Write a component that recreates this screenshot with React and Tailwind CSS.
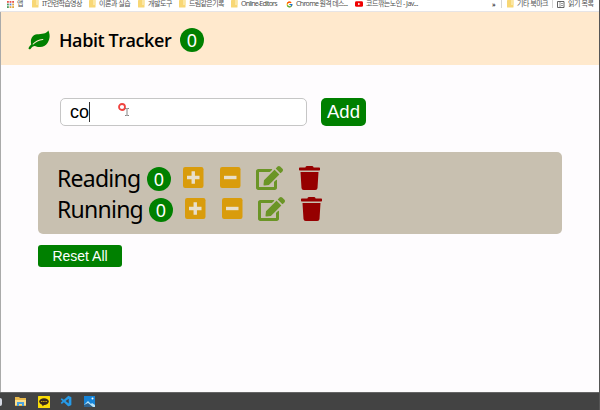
import React from "react";
import { FaEdit, FaTrash } from "react-icons/fa";
import { FcGoogle } from "react-icons/fc";
import { VscVscode } from "react-icons/vsc";

function Folder() {
  return (
    <svg className="h-2 w-[7px] shrink-0" viewBox="0 0 7 8">
      <rect width="6.5" height="7.5" rx="0.6" fill="#f8d775" />
      <path d="M4 0h2.5v5H4z" fill="#fbe6a2" />
    </svg>
  );
}

function AppsGrid() {
  const colors = ["#e5544a", "#e5544a", "#e5544a", "#4a9b5c", "#5a83d8", "#e0a63c", "#4a9b5c", "#e0a63c", "#e0a63c"];
  return (
    <svg className="h-[7px] w-[7px] shrink-0" viewBox="0 0 7 7">
      {colors.map((c, i) => (
        <rect key={i} x={(i % 3) * 2.6} y={Math.floor(i / 3) * 2.6} width="1.8" height="1.8" fill={c} />
      ))}
    </svg>
  );
}

function YouTube() {
  return (
    <svg className="h-[6px] w-2 shrink-0" viewBox="0 0 14 10">
      <rect width="14" height="10" rx="2.5" fill="#f00000" />
      <path d="M5.5 2.8v4.4L9.5 5z" fill="#fff" />
    </svg>
  );
}

function Leaf() {
  return (
    <svg className="h-5 w-[22px] shrink-0" viewBox="0 0 22 20">
      <path
        d="M20.3.4C22.2 4 22.2 9 19.5 13C17 17 12.5 18 7.5 16.2C5.5 15.800 4 17 2.500 19C1.700 19.800.2 19.100.6 18C1.200 16.600 2.200 15.300 3.200 14.500C2 9.200 4.200 5 9 4.300C14 3.700 18 4 20.300.4Z"
        fill="#008000"
      />
      <path d="M5.200 14C7.500 11.500 10.500 10 14.800 9.500" fill="none" stroke="#ffe9cd" strokeWidth="1.100" strokeLinecap="round" />
    </svg>
  );
}

function SquareIcon({ glyph }) {
  return (
    <svg className="size-[21px] shrink-0" viewBox="0 0 21 21">
      <rect width="20.5" height="21" rx="2.2" fill="#d99c0c" />
      <path d={glyph} stroke="#e8dfcb" strokeWidth="3.4" fill="none" />
    </svg>
  );
}

function Bookmark({ icon, label, width, tracking = "tracking-[-0.4px]" }) {
  return (
    <div className={`flex shrink-0 items-center gap-[3px] ${width}`}>
      {icon}
      <span className={tracking}>{label}</span>
    </div>
  );
}

function BookmarksBar() {
  return (
    <div className="flex h-3 items-start border-b border-[#e6e4e6] bg-white pl-[7px] text-[7px] leading-[8px] whitespace-nowrap text-[#505050]">
      <Bookmark icon={<AppsGrid />} label="앱" width="w-[25px]" />
      <Bookmark icon={<Folder />} label="IT관련학습영상" width="w-[57px]" tracking="tracking-[-0.65px]" />
      <Bookmark icon={<Folder />} label="이론과 실습" width="w-[49px]" tracking="tracking-[-0.45px]" />
      <Bookmark icon={<Folder />} label="개발도구" width="w-[41px]" />
      <Bookmark icon={<Folder />} label="드림같은기록" width="w-[52px]" tracking="tracking-[-0.65px]" />
      <Bookmark icon={<Folder />} label="Online-Editors" width="w-[55px]" tracking="tracking-[-0.8px]" />
      <Bookmark icon={<FcGoogle className="h-[7px] w-[7px]" />} label="Chrome 원격 데스..." width="w-[69px]" tracking="tracking-[-0.65px]" />
      <Bookmark icon={<YouTube />} label="코드깎는노인 - Jav..." width="w-[137px]" tracking="tracking-[-0.5px]" />
      <span className="w-[9px] shrink-0 text-[7px] leading-[10px] text-black">»</span>
      <div className="h-2 w-1.5 shrink-0 border-l border-[#d5d5d5]" />
      <Bookmark icon={<Folder />} label="기타 북마크" width="w-[45px]" tracking="tracking-[-0.5px]" />
      <div className="h-2 w-[5px] shrink-0 border-l border-[#d5d5d5]" />
      <Bookmark
        icon={
          <svg className="h-[7px] w-2 shrink-0" viewBox="0 0 8 7" fill="none" stroke="#555">
            <path d="M.5.5h6.5v6H.5z" strokeWidth=".9" />
            <path d="M3 .5v6M4 2.5h2M4 4.5h2" strokeWidth=".6" />
          </svg>
        }
        label="읽기 목록"
        width="w-[38px]"
      />
    </div>
  );
}

function Count({ children }) {
  return (
    <span className="flex size-6 shrink-0 items-center justify-center rounded-full bg-[#008000] pt-px text-[18px] leading-none text-white">
      {children}
    </span>
  );
}

function HabitRow({ name, nameWidth }) {
  return (
    <li className="flex h-[31px] items-center">
      <span className={`shrink-0 text-[23px] leading-[31px] tracking-[-0.75px] ${nameWidth}`}>{name}</span>
      <Count>0</Count>
      <div className="mb-[2px] ml-[12px] flex gap-[15.5px]">
        <SquareIcon glyph="M4 10.5h12.5M10.25 4.2v12.6" />
        <SquareIcon glyph="M4 10.5h12.5" />
      </div>
      <FaEdit className="mb-[2px] ml-[15px] h-6 w-[27px] text-[#6b9526]" />
      <FaTrash className="mb-[2px] ml-4 h-6 w-[21px] text-[#960000]" />
    </li>
  );
}

function Taskbar() {
  return (
    <div className="flex h-[18px] items-center border-t border-[#666] bg-[#434343]">
      <div className="h-2 w-[2px] rounded-r bg-[#d5d8e2]" />
      <svg className="ml-[13px] h-[9px] w-[11px]" viewBox="0 0 11 9">
        <path d="M0 0h4l1 1h6v8H0z" fill="#e8b84b" />
        <path d="M0 3h11v5H0z" fill="#fbdf8c" />
        <path d="M2 5h7v4H7V7H4v2H2z" fill="#4aa3df" />
      </svg>
      <svg className="ml-3 size-3" viewBox="0 0 12 12">
        <rect width="12" height="12" rx="0.5" fill="#fbdc08" />
        <ellipse cx="6" cy="5.6" rx="4.8" ry="3.4" fill="#38291c" />
        <path d="M4 7l.5 3.2L7.5 8z" fill="#38291c" />
        <path d="M3 5.5h6" stroke="#c8a818" strokeWidth="1" strokeDasharray="1.2 .5" />
      </svg>
      <VscVscode className="ml-[10px] size-[13px] text-[#279be8]" />
      <svg className="ml-[11px] h-[11px] w-[11px]" viewBox="0 0 11 11">
        <rect width="11" height="11" fill="#1684d8" />
        <path d="M0 9l4-4 3 3 1-1 3 2v2H0z" fill="#b5e3fa" />
        <path d="M0 11V9l4-2 5 4z" fill="#2e628e" />
        <circle cx="8.5" cy="2.5" r="1" fill="#fff" />
      </svg>
    </div>
  );
}

export default function App() {
  return (
    <div className="relative flex h-[410px] w-[600px] flex-col overflow-hidden border-r border-r-[#555] bg-[#fefcfe] font-['Noto_Sans','Noto_Sans_CJK_KR',sans-serif] text-black">
      <BookmarksBar />
      <div className="flex flex-1 flex-col border-l border-[#aaa]">
        <header className="flex h-[53px] items-center bg-[#ffe9cd] pt-[2px] pl-[27px]">
          <Leaf />
          <h1 className="ml-[9px] w-[121px] font-['Open_Sans',sans-serif] text-[18px] leading-6 font-semibold tracking-[-0.42px] whitespace-nowrap">
            Habit Tracker
          </h1>
          <Count>0</Count>
        </header>
        <main className="flex flex-col items-start pl-[37px]">
          <form className="mt-[33px] ml-[22px] flex gap-[14px] font-['Liberation_Sans',sans-serif]">
            <div className="flex h-7 w-[247px] items-center rounded-[5px] border border-[#c6c6c6] bg-white pl-[9px] text-[18px] leading-5">
              <span className="border-r border-[#333]">co</span>
            </div>
            <button type="button" className="flex h-7 w-[45px] items-center justify-center rounded-[5px] bg-[#008000] text-[18.5px] text-white">
              Add
            </button>
          </form>
          <ul className="mt-[26px] h-[82px] w-[524px] rounded-[5px] bg-[#c8c0b0] pt-[11px] pl-[19px]">
            <HabitRow name="Reading" nameWidth="w-[90px]" />
            <HabitRow name="Running" nameWidth="w-[92px]" />
          </ul>
          <button type="button" className="mt-[11px] flex h-[22px] w-[84px] items-center justify-center rounded-[3px] bg-[#008000] font-['Liberation_Sans',sans-serif] text-[14px] text-white">
            Reset All
          </button>
        </main>
      </div>
      <Taskbar />
      <svg className="absolute top-[102px] left-[117px] h-4 w-3.5" viewBox="0 0 14 16" fill="none">
        <circle cx="5" cy="5" r="3" stroke="#f04440" strokeWidth="1.8" />
        <path d="M8 6.5h1.5l.5.5.5-.5H12M10 7v6M8 13.5h1.5l.5-.5.5.5H12" stroke="#777" strokeWidth=".9" />
      </svg>
    </div>
  );
}
